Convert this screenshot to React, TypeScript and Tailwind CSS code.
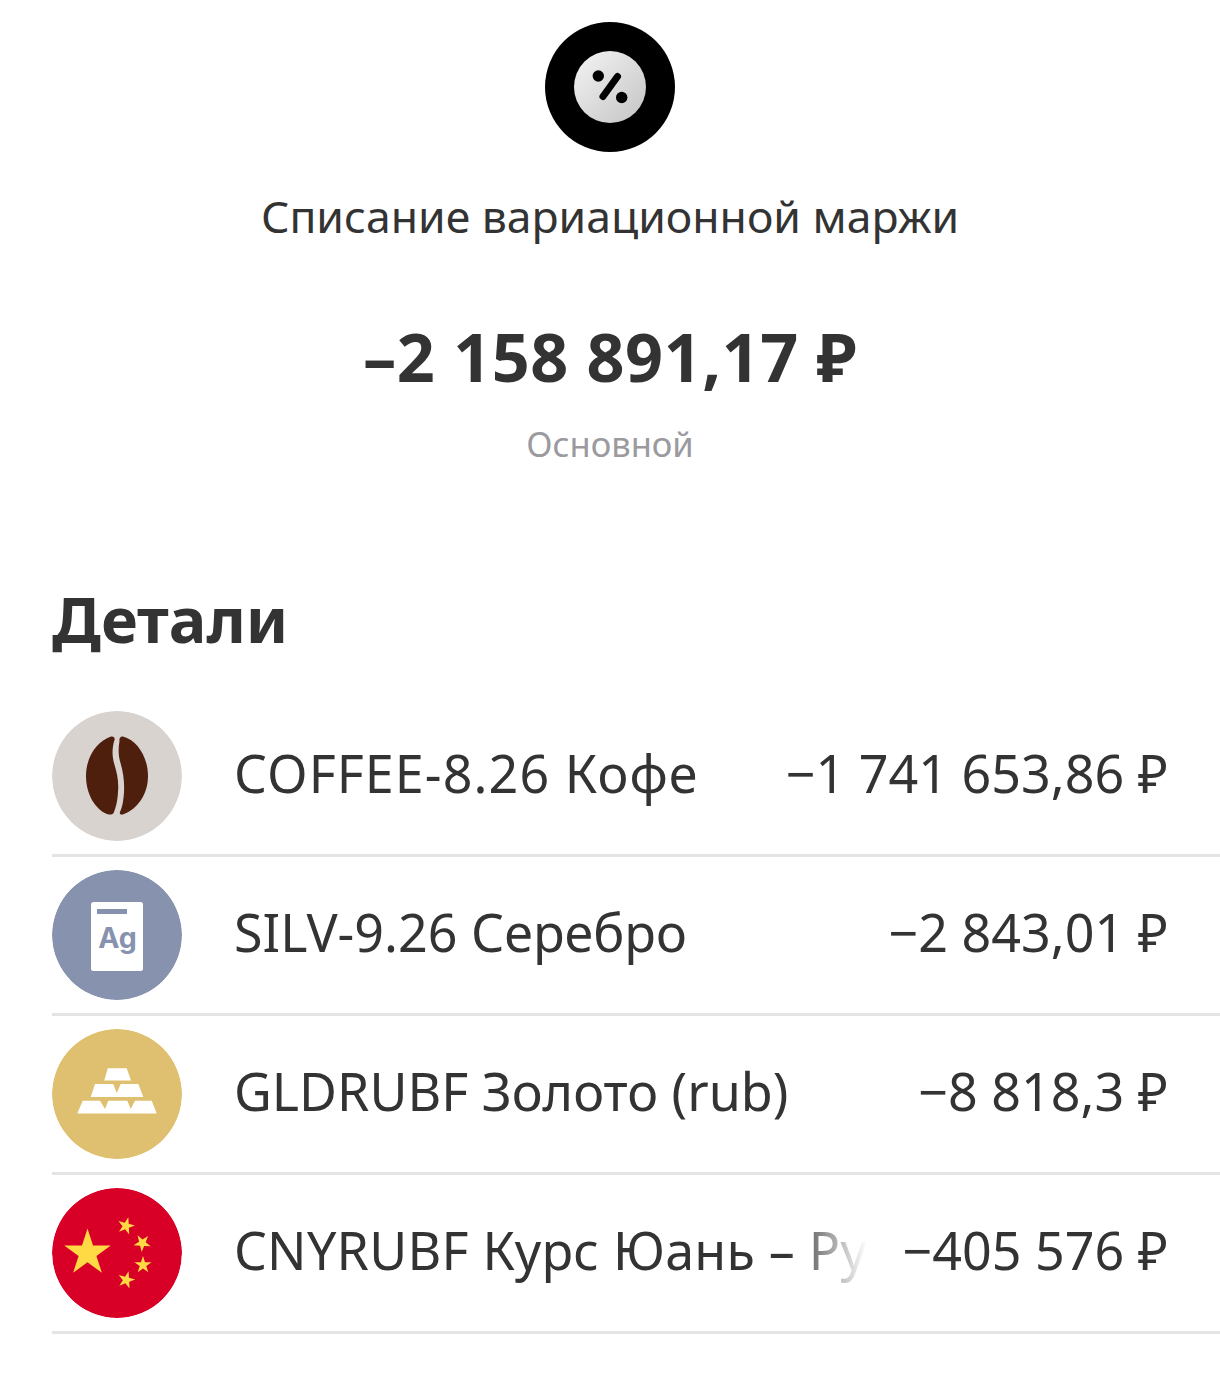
import React from "react";

const font = { fontFamily: '"Noto Sans", "DejaVu Sans", sans-serif' };

function Coffee() {
  return (
    <svg viewBox="0 0 130 130" className="w-[130px] h-[130px] block">
      <circle cx="65" cy="65" r="65" fill="#d9d3d0" />
      <path d="M59 25.500C62 25 63 27 62.500 29C60 37 60 44 62 52C65 62 67 70 66 81C65.500 90 64 96 62 101C61 104 58 104 55 103C43 98 34 83 34 65C34 46 45 30 59 25.500Z" fill="#4f1f0e" />
      <path d="M71 25.500C68 25 67 28 67.500 30C66 38 66.500 46 68.500 52C71.500 62 72.500 72 72 81C71.500 90 70 97 68 101C67 104 70 104 72 103C85 98 96 84 96 65C96 46 85 29 71 25.500Z" fill="#4f1f0e" />
    </svg>
  );
}

function Silver() {
  return (
    <svg viewBox="0 0 130 130" className="w-[130px] h-[130px] block">
      <circle cx="65" cy="65" r="65" fill="#8793ae" />
      <rect x="39" y="32" width="52" height="69" rx="2.500" fill="#ffffff" />
      <rect x="45" y="39" width="30" height="5" fill="#8793ae" />
      <text x="65.500" y="78" textAnchor="middle" fontSize="28.500" fontWeight="700" fill="#8793ae" fontFamily="Inter, 'Liberation Sans', sans-serif">Ag</text>
    </svg>
  );
}

function Gold() {
  return (
    <svg viewBox="0 0 130 130" className="w-[130px] h-[130px] block">
      <circle cx="65" cy="65" r="65" fill="#dfc070" />
      <g fill="#ffffff">
        <path d="M55.700 39.300H74.700L79 51.500H52.300Z" />
        <path d="M43 55H61.300L64.700 64L68.700 55H86.300L91.300 68H38.700Z" />
        <path d="M30.700 71.700H48L53 80L56.300 71.700H75.300L78.700 80L83 71.700H99.700L104.700 84.500H25.300Z" />
      </g>
    </svg>
  );
}

function star(cx: number, cy: number, r: number, rot: number) {
  const pts: string[] = [];
  for (let i = 0; i < 10; i++) {
    const rad = i % 2 === 0 ? r : r * 0.382;
    const a = ((rot - 90 + i * 36) * Math.PI) / 180;
    pts.push(`${(cx + rad * Math.cos(a)).toFixed(2)},${(cy + rad * Math.sin(a)).toFixed(2)}`);
  }
  return pts.join(" ");
}

function China() {
  return (
    <svg viewBox="0 0 130 130" className="w-[130px] h-[130px] block">
      <circle cx="65" cy="65" r="65" fill="#d80027" />
      <g fill="#ffda44">
        <polygon points={star(35.500, 65, 24.500, 0)} />
        <polygon points={star(74, 38, 9, 15)} />
        <polygon points={star(90.300, 55, 9, 40)} />
        <polygon points={star(91, 77, 9, 0)} />
        <polygon points={star(74.300, 92, 9, 15)} />
      </g>
    </svg>
  );
}

function PercentBadge() {
  return (
    <svg viewBox="0 0 130 130" className="w-[130px] h-[130px] block">
      <defs>
        <linearGradient id="pg" x1="0" y1="0" x2="1" y2="1">
          <stop offset="0%" stopColor="#f4f4f4" />
          <stop offset="100%" stopColor="#c4c4c4" />
        </linearGradient>
      </defs>
      <circle cx="65" cy="65" r="65" fill="#000000" />
      <circle cx="65" cy="65" r="36" fill="url(#pg)" />
      <circle cx="53.300" cy="54" r="5.700" fill="#000000" />
      <circle cx="76.700" cy="75.500" r="5.700" fill="#000000" />
      <path d="M72.500 54.500L58 74.500" stroke="#000000" strokeWidth="7" strokeLinecap="round" />
    </svg>
  );
}

const rows = [
  { icon: <Coffee />, name: "COFFEE-8.26 Кофе", value: "−1 741 653,86 ₽", nameClass: "tracking-[1.1px]" },
  { icon: <Silver />, name: "SILV-9.26 Серебро", value: "−2 843,01 ₽", nameClass: "" },
  { icon: <Gold />, name: "GLDRUBF Золото (rub)", value: "−8 818,3 ₽", nameClass: "" },
  { icon: <China />, name: "CNYRUBF Курс Юань – Рубль", value: "−405 576 ₽", nameClass: "tracking-[0.25px] [mask-image:linear-gradient(to_right,#000_87%,transparent_99.500%)]" },
];

export default function App() {
  return (
    <div className="w-[1220px] h-[1380px] bg-white text-[#333333] overflow-hidden" style={font}>
      <div className="flex flex-col items-center pt-[22px]">
        <PercentBadge />
        <div className="mt-[34px] text-[44.500px] leading-[60px]">Списание вариационной маржи</div>
        <div className="mt-[66px] text-[66.500px] leading-[88px] font-bold tracking-[0.5px]">–2 158 891,17 ₽</div>
        <div className="mt-[22px] text-[34.500px] leading-[44px] text-[#9a9a9f]">Основной</div>
      </div>
      <div className="pl-[52px] mt-[111px]">
        <div className="text-[63px] leading-[84px] font-bold">Детали</div>
        <div className="mt-[50px] flex flex-col">
          {rows.map((r) => (
            <div key={r.name} className="h-[159px] flex flex-col">
              <div className="flex items-center h-[130px] pr-[52px] gap-[32px]">
                <div className="w-[130px] h-[130px] shrink-0 mr-[21px] -ml-0 rounded-full overflow-hidden">{r.icon}</div>
                <div className={`-ml-[1px] flex-1 min-w-0 overflow-hidden whitespace-nowrap text-[52px] leading-[70px] pb-[6px] ${r.nameClass}`}>
                  {r.name}
                </div>
                <div className="shrink-0 whitespace-nowrap text-[52px] leading-[70px] pb-[6px]">{r.value}</div>
              </div>
              <div className="mt-[13px] h-[3px] bg-[#e4e4e4]" />
            </div>
          ))}
        </div>
      </div>
    </div>
  );
}
